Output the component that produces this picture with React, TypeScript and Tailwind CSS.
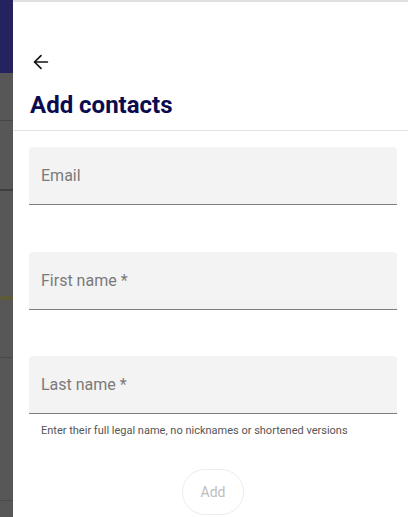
import React from "react";

const fields = ["Email", "First name *", "Last name *"];

function Field({ label }: { label: string }) {
  return (
    <div className="h-[58px] rounded-t-[4px] bg-[#f3f3f3] border-b border-[#7d7d7d] flex items-center px-3">
      <span className="text-[16px] text-[#7a7a7a]">{label}</span>
    </div>
  );
}

export default function App() {
  return (
    <div
      className="flex w-[408px] h-[517px] overflow-hidden bg-white"
      style={{ fontFamily: "Roboto, 'Noto Sans', sans-serif" }}>
      {/* page behind the drawer, dimmed */}
      <div className="w-[13px] flex flex-col shrink-0">
        <div className="h-[73px] bg-[#24225f]" />
        <div className="flex-1 flex flex-col bg-[#575757]">
          <div className="h-[47px]" />
          <div className="h-px bg-[#474747]" />
          <div className="h-[68px]" />
          <div className="h-[2px] bg-[#3e3e3e]" />
          <div className="h-[105px]" />
          <div className="h-[4px] bg-[#5d5b38]" />
          <div className="h-[57px]" />
          <div className="h-px bg-[#4a4a4a]" />
          <div className="h-[142px]" />
          <div className="h-px bg-[#4a4a4a]" />
        </div>
      </div>

      {/* drawer */}
      <div className="flex-1 flex flex-col border-t-2 border-[#e0e0e0]">
        <div className="pl-[17px] pt-[49px]">
          <svg
            width="22"
            height="22"
            viewBox="0 0 24 24"
            fill="none"
            stroke="#111"
            strokeWidth="1.8"
            strokeLinecap="round"
            strokeLinejoin="round">
            <path d="M19 12H5" />
            <path d="m12 19-7-7 7-7" />
          </svg>
        </div>
        <h1 className="pl-[17px] mt-[17px] text-[24px] leading-[30px] font-bold text-[#0b0b4f]">
          Add contacts
        </h1>
        <div className="mt-[10px] h-px bg-[#e3e3e3]" />

        <div className="pl-[16px] pr-[11px] pt-[16px] flex flex-col">
          <Field label={fields[0]} />
          <div className="h-[47px]" />
          <Field label={fields[1]} />
          <div className="h-[46px]" />
          <Field label={fields[2]} />
          <p className="pl-3 mt-[10px] text-[11px] leading-[14px] text-[#555]">
            Enter their full legal name, no nicknames or shortened versions
          </p>
          <div className="flex justify-center mt-[31px]">
            <button
              type="button"
              disabled
              className="w-[62px] h-[46px] rounded-full border border-[#ececec] text-[14px] text-[#bdbdbd] bg-white">
              Add
            </button>
          </div>
        </div>
      </div>
    </div>
  );
}
